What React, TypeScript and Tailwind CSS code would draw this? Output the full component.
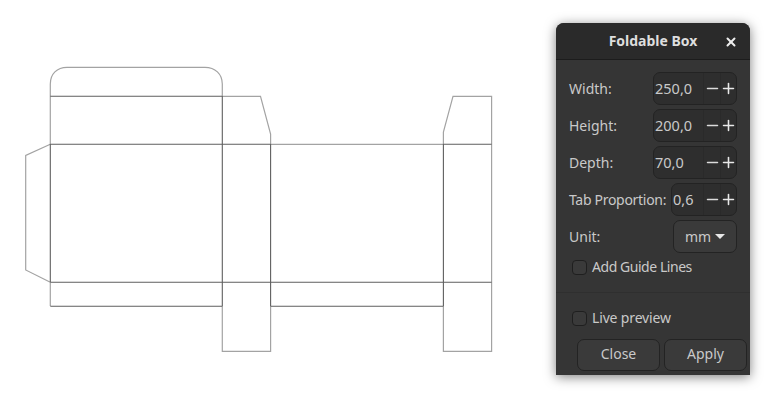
import { Minus, Plus, X } from "lucide-react";

const fields = [
  { label: "Width:", value: "250,0", entry: "w-[49px]" },
  { label: "Height:", value: "200,0", entry: "w-[49px]" },
  { label: "Depth:", value: "70,0", entry: "w-[49px]" },
  { label: "Tab Proportion:", value: "0,6", entry: "w-[31px]" },
];

const BoxDrawing = () => (
  <svg width="556" height="403" viewBox="0 0 556 403" fill="none" className="shrink-0">
    {/* outline */}
    <g stroke="#a3a3a3" strokeWidth="1.2">
      <path d="M50.3 96V84C50.3 74 57 67.3 67 67.3H205C215 67.3 222.3 74 222.3 84V96" />
      <path d="M50.3 96V144M50.3 282V306" />
      <path d="M222.3 96.3H260.5L270.6 134V144M443.4 144V132L453 96.3H491.6V351.3H443.4V306" />
      <path d="M222.3 306V351.3H270.6V306" />
      <path d="M50.3 144.3L25.7 155.5V270L50.3 282.3" />
      <path d="M270.6 144.3H443.4" />
    </g>
    {/* fold lines */}
    <g stroke="#5f5f5f" strokeWidth="1.1">
      <path d="M50.3 96.3H222.3M50.3 144.3H270.6M443.4 144.3H491.6M50.3 282.3H491.6" />
      <path d="M50.3 144V282M222.3 96V306M270.6 144V306M443.4 144V306" />
      <path d="M50.3 306.3H222.3M270.6 306.3H443.4" />
    </g>
  </svg>
);

const SpinField = ({ label, value, entry }: { label: string; value: string; entry: string }) => (
  <div className="flex h-[33px] items-center justify-between">
    <span className={`whitespace-nowrap ${label.length > 10 ? "tracking-[-0.3px]" : ""}`}>{label}</span>
    <div className="flex h-full items-stretch rounded-[7px] border border-[#232323] bg-[#2e2e2e]">
      <span className={`${entry} flex items-center pb-[2px] pl-[1px] text-[14.5px]`}>{value}</span>
      <span className="flex w-[17px] items-center justify-center border-l border-[#2a2a2a]">
        <Minus size={17} strokeWidth={2.2} color="#dcdcdc" className="shrink-0" />
      </span>
      <span className="flex w-[16px] items-center justify-center border-l border-[#2a2a2a]">
        <Plus size={17} strokeWidth={2.2} color="#e8e8e8" className="shrink-0" />
      </span>
    </div>
  </div>
);

const CheckRow = ({ label, tight }: { label: string; tight?: boolean }) => (
  <label className={`flex items-center gap-[5px] ${tight ? "tracking-[-0.45px]" : "tracking-[-0.15px]"}`}>
    <span className="h-[15px] w-[15px] rounded-[4px] border border-[#1f1f1f] bg-[#3a3a3a]" />
    {label}
  </label>
);

export default function App() {
  return (
    <div className="flex h-[403px] w-[768px] items-start overflow-hidden bg-white font-['Noto_Sans',sans-serif] text-[14px] leading-[20px] text-[#c9c9c9]">
      <BoxDrawing />
      <div className="mt-[23px] flex h-[352px] w-[194px] shrink-0 flex-col rounded-t-[8px] bg-[#353535] shadow-[0_2px_12px_rgba(0,0,0,0.5)]">
        <div className="relative flex h-[37px] shrink-0 items-center justify-center rounded-t-[8px] border-b border-[#1c1c1c] bg-[#2a2a2a] font-bold text-[#dedede]">
          <span>Foldable Box</span>
          <X size={14} strokeWidth={3.4} color="#eeeeee" className="absolute right-[12px] top-[12px]" />
        </div>
        <div className="flex flex-col gap-[4px] pl-[13px] pr-[13px] pt-[12px]">
          {fields.map((f) => (
            <SpinField key={f.label} {...f} />
          ))}
          <div className="flex h-[33px] items-center justify-between">
            <span>Unit:</span>
            <div className="flex h-full w-[64px] items-center justify-center gap-[4px] rounded-[7px] border border-[#232323] bg-[#3a3a3a]">
              mm
              <span className="h-0 w-0 border-x-[5.5px] border-t-[5px] border-x-transparent border-t-[#e8e8e8]" />
            </div>
          </div>
        </div>
        <div className="pl-[16px] pt-[4px]">
          <CheckRow label="Add Guide Lines" tight />
        </div>
        <div className="mt-[15px] border-t border-[#2f2f2f] pl-[16px] pt-[15px]">
          <CheckRow label="Live preview" />
        </div>
        <div className="mt-[11px] flex gap-[4px] pl-[21px]">
          <button className="h-[32px] w-[83px] rounded-[7px] border border-[#232323] bg-[#3a3a3a] pb-[2px]">Close</button>
          <button className="h-[32px] w-[83px] rounded-[7px] border border-[#232323] bg-[#3a3a3a] pb-[2px]">Apply</button>
        </div>
      </div>
    </div>
  );
}
